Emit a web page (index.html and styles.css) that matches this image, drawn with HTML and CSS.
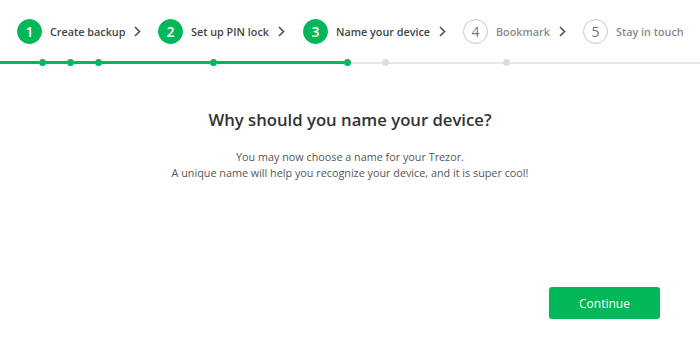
FILE: index.html
```html
<!DOCTYPE html>
<html lang="en">
<head>
    <meta charset="UTF-8">
    <meta name="viewport" content="width=device-width, initial-scale=1.0">
    <title>Name your device</title>
    <link rel="stylesheet" href="styles.css">
</head>
<body>
    <div class="steps">
        <div class="step done w1">
            <span class="num">1</span>
            <span class="label">Create backup</span>
            <svg class="chevron" width="7" height="11" viewBox="0 0 7 11"><polyline points="1,1 5.5,5.5 1,10" fill="none" stroke="#555" stroke-width="1.7"/></svg>
        </div>
        <div class="step done w2">
            <span class="num">2</span>
            <span class="label">Set up PIN lock</span>
            <svg class="chevron" width="7" height="11" viewBox="0 0 7 11"><polyline points="1,1 5.5,5.5 1,10" fill="none" stroke="#555" stroke-width="1.7"/></svg>
        </div>
        <div class="step done w3">
            <span class="num">3</span>
            <span class="label">Name your device</span>
            <svg class="chevron" width="7" height="11" viewBox="0 0 7 11"><polyline points="1,1 5.5,5.5 1,10" fill="none" stroke="#555" stroke-width="1.7"/></svg>
        </div>
        <div class="step w4">
            <span class="num">4</span>
            <span class="label">Bookmark</span>
            <svg class="chevron" width="7" height="11" viewBox="0 0 7 11"><polyline points="1,1 5.5,5.5 1,10" fill="none" stroke="#555" stroke-width="1.7"/></svg>
        </div>
        <div class="step">
            <span class="num">5</span>
            <span class="label">Stay in touch</span>
        </div>
    </div>

    <!-- progress track with sub-step dots -->
    <div class="progress">
        <div class="seg done s1"></div>
        <div class="dot done"></div>
        <div class="seg done s2"></div>
        <div class="dot done"></div>
        <div class="seg done s2"></div>
        <div class="dot done"></div>
        <div class="seg done s4"></div>
        <div class="dot done"></div>
        <div class="seg done s5"></div>
        <div class="dot done"></div>
        <div class="seg s6"></div>
        <div class="dot"></div>
        <div class="seg s7"></div>
        <div class="dot"></div>
        <div class="seg rest"></div>
    </div>

    <div class="content">
        <h1>Why should you name your device?</h1>
        <p>You may now choose a name for your Trezor.<br>A unique name will help you recognize your device, and it is super cool!</p>
    </div>

    <div class="actions">
        <button class="continue">Continue</button>
    </div>
</body>
</html>
```

FILE: styles.css
```css
body {
    margin: 0;
    font-family: "Open Sans", Arial, sans-serif;
    background: #fff;
    color: #333;
}
.steps {
    display: flex;
    align-items: center;
    padding: 18px 0 0 17px;
    height: 26px;
}
.step {
    display: flex;
    align-items: center;
    white-space: nowrap;
    flex-shrink: 0;
}
.w1 { width: 141px; }
.w2 { width: 145px; }
.w3 { width: 160px; }
.w4 { width: 120px; }
.step .num {
    width: 23px;
    height: 23px;
    border: 1px solid #c8c8c8;
    border-radius: 50%;
    display: flex;
    align-items: center;
    justify-content: center;
    font-size: 14px;
    color: #777;
    flex-shrink: 0;
}
.step.done .num {
    background: #01b757;
    border-color: #01b757;
    color: #fff;
    font-weight: 600;
}
.step .label {
    margin-left: 8px;
    font-size: 10.8px;
    font-weight: 600;
    color: #888;
}
.step.done .label {
    color: #444;
}
.step .chevron {
    margin-left: 9px;
    flex-shrink: 0;
}
.progress {
    display: flex;
    align-items: center;
    height: 7px;
    margin-top: 15px;
}
.seg {
    height: 2px;
    background: #e6e6e6;
}
.seg.done {
    height: 3px;
    background: #01b757;
}
.s1 { width: 39px; }
.s2 { width: 21px; }
.s4 { width: 108px; }
.s5 { width: 127px; }
.s6 { width: 31px; }
.s7 { width: 114px; }
.rest { flex: 1; }
.dot {
    width: 7px;
    height: 7px;
    border-radius: 50%;
    background: #dcdcdc;
}
.dot.done {
    background: #01b757;
}
.content {
    text-align: center;
    margin-top: 42px;
}
.content h1 {
    margin: 0;
    font-size: 16.7px;
    font-weight: 600;
    color: #333;
}
.content p {
    margin: 18px 0 0;
    font-size: 10.8px;
    line-height: 16px;
    color: #555;
}
.actions {
    display: flex;
    justify-content: flex-end;
    padding-right: 40px;
    margin-top: 106px;
}
.continue {
    width: 111px;
    height: 32px;
    border: none;
    border-radius: 3px;
    background: #01b757;
    color: #fff;
    font-family: "Open Sans", Arial, sans-serif;
    font-size: 12px;
    cursor: pointer;
}
```
